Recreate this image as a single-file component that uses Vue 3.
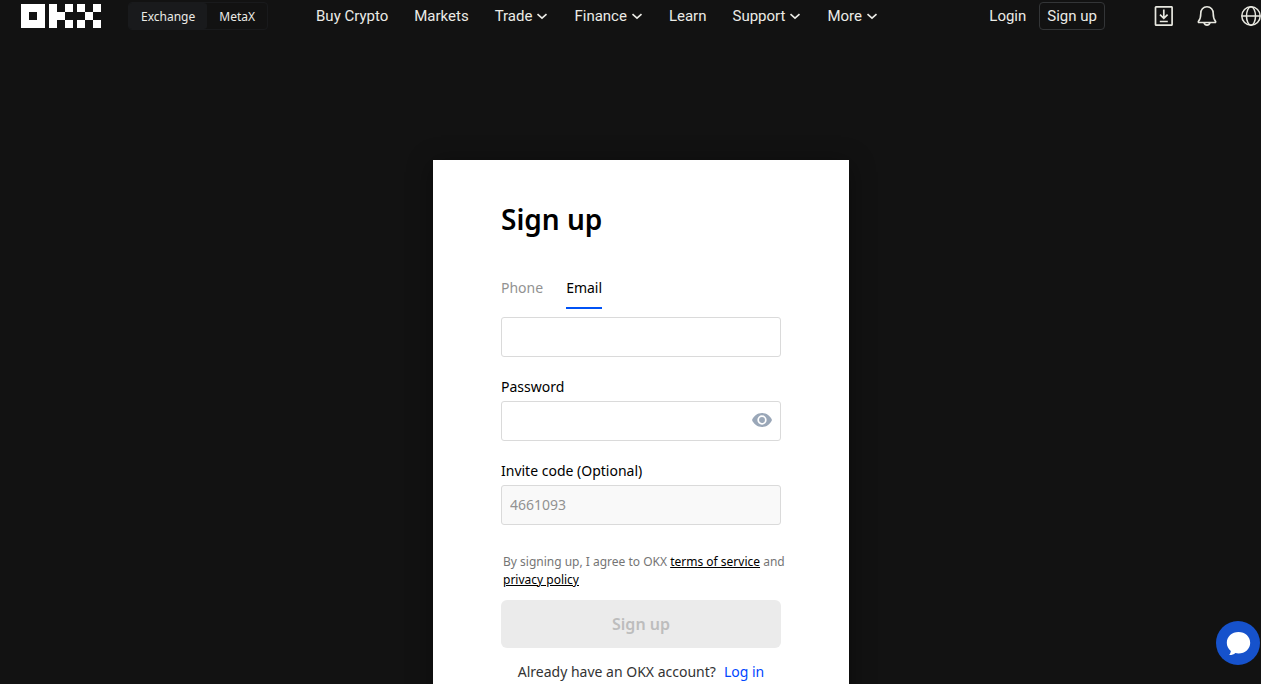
<script setup>
import { ref } from 'vue'

const navItems = [
  { label: 'Buy Crypto', menu: false },
  { label: 'Markets', menu: false },
  { label: 'Trade', menu: true },
  { label: 'Finance', menu: true },
  { label: 'Learn', menu: false },
  { label: 'Support', menu: true },
  { label: 'More', menu: true },
]

const tabs = ['Phone', 'Email']
const activeTab = ref('Email')
const account = ref('')
const password = ref('')
const showPassword = ref(false)
const inviteCode = ref('4661093')
</script>

<template>
  <div class="page">
    <header class="header">
      <a class="logo" href="#" aria-label="OKX">
        <svg width="80" height="24" viewBox="0 0 80 24" fill="#fff" shape-rendering="crispEdges" aria-hidden="true">
          <path fill-rule="evenodd" d="M0 0h24v24H0zM8 8v8h8V8z" />
          <path d="M28 0h8v8h8v8h-8v8h-8zM44 0h8v8h-8zM44 16h8v8h-8z" />
          <path d="M56 0h8v8h-8zM72 0h8v8h-8zM64 8h8v8h-8zM56 16h8v8h-8zM72 16h8v8h-8z" />
        </svg>
      </a>
      <div class="switch">
        <button type="button" class="switch-item on">Exchange</button>
        <button type="button" class="switch-item">MetaX</button>
      </div>
      <nav class="nav">
        <a v-for="item in navItems" :key="item.label" class="nav-item" href="#">
          {{ item.label }}
          <svg v-if="item.menu" width="12" height="12" viewBox="0 0 12 12" aria-hidden="true">
            <path d="M1.5 4.2 6 8.2l4.500-4" fill="none" stroke="currentColor" stroke-width="1.600" />
          </svg>
        </a>
      </nav>
      <div class="tools">
        <a class="login" href="#">Login</a>
        <a class="signup" href="#">Sign up</a>
        <button type="button" class="icon first" aria-label="Download">
          <svg width="20" height="20" viewBox="0 0 20 20" fill="none" stroke="#e8e8e0" stroke-width="1.700" aria-hidden="true">
            <rect x="2.500" y="0.800" width="16.600" height="18.400" rx="0.800" />
            <path d="M10.800 3.500v8.700M7 8.700l3.800 3.700 3.800-3.700M6.800 15.500h8" />
          </svg>
        </button>
        <button type="button" class="icon" aria-label="Notifications">
          <svg width="20" height="20" viewBox="0 0 20 20" fill="none" stroke="#e8e8e0" stroke-width="1.600" stroke-linejoin="round" aria-hidden="true">
            <path d="M10 .8C6 .8 3.800 3.700 3.800 7.200c0 4.200-.8 6.300-2.300 8.100-.4.600-.1 1.200.5 1.200h16c.6 0 .9-.6.5-1.200-1.500-1.800-2.300-3.900-2.300-8.100C16.200 3.700 14 .8 10 .8z" />
            <path d="M7 16.800c.5 1.500 1.600 2.300 3 2.300s2.500-.8 3-2.300" />
          </svg>
        </button>
        <button type="button" class="icon" aria-label="Language">
          <svg width="20" height="20" viewBox="0 0 20 20" fill="none" stroke="#e8e8e0" stroke-width="1.500" aria-hidden="true">
            <circle cx="10" cy="10" r="9.200" />
            <ellipse cx="10" cy="10" rx="4.500" ry="9.200" />
            <path d="M.8 10h18.400" />
          </svg>
        </button>
      </div>
    </header>

    <main class="main">
      <form class="card" @submit.prevent>
        <h1>Sign up</h1>
        <div class="tabs" role="tablist">
          <button
            v-for="tab in tabs"
            :key="tab"
            type="button"
            role="tab"
            class="tab"
            :class="{ active: tab === activeTab }"
            :aria-selected="tab === activeTab"
            @click="activeTab = tab"
          >{{ tab }}</button>
        </div>
        <input v-model="account" class="field" type="text" :aria-label="activeTab" />

        <label class="label" for="password">Password</label>
        <div class="field-wrap">
          <input id="password" v-model="password" class="field" :type="showPassword ? 'text' : 'password'" />
          <button type="button" class="eye" aria-label="Show password" @click="showPassword = !showPassword">
            <svg width="20" height="14" viewBox="0 0 20 14" aria-hidden="true">
              <path d="M10 0C5.500 0 1.700 2.800 0 7c1.700 4.200 5.500 7 10 7s8.300-2.800 10-7c-1.700-4.200-5.500-7-10-7z" fill="#9aa7b8" />
              <circle cx="10" cy="7" r="3.800" fill="#9aa7b8" stroke="#fff" stroke-width="1.700" />
            </svg>
          </button>
        </div>

        <label class="label" for="invite">Invite code (Optional)</label>
        <input id="invite" v-model="inviteCode" class="field filled" type="text" disabled />

        <p class="terms">
          By signing up, I agree to OKX <a href="#">terms of service</a> and <a href="#">privacy policy</a>
        </p>
        <button type="submit" class="submit" disabled>Sign up</button>
        <p class="existing">Already have an OKX account?<a href="#">Log in</a></p>
      </form>
    </main>

    <button type="button" class="chat" aria-label="Chat">
      <svg width="44" height="44" viewBox="0 0 44 44" aria-hidden="true">
        <path d="M22.500 11c-6.600 0-11.700 4.600-11.700 10.700 0 3.300 1.500 6.200 4 8.200-.2 1.800-.7 2.900-1.700 4.200 2.600.1 4.700-.6 6.200-2.100 1 .3 2.100.4 3.200.4 6.600 0 11.700-4.600 11.700-10.700S29.100 11 22.500 11z" fill="#fff" />
      </svg>
    </button>
  </div>
</template>

<style>
body {
  margin: 0;
  background: #121212;
}
</style>

<style scoped>
.page {
  height: 100vh;
  overflow: hidden;
  background: #121212;
  color: #000;
  font-family: "Noto Sans", sans-serif;
  font-size: 14px;
}
.page * {
  box-sizing: border-box;
}
button,
input {
  font: inherit;
}
button {
  margin: 0;
  padding: 0;
  border: 0;
  background: none;
  color: inherit;
}
a {
  color: inherit;
  text-decoration: none;
}
svg {
  display: block;
}
.header {
  display: flex;
  align-items: center;
  height: 32px;
  padding-left: 21px;
  color: #ebebe6;
  font-family: Roboto, sans-serif;
  font-size: 15px;
  white-space: nowrap;
}
.switch {
  display: flex;
  height: 28px;
  margin-left: 27px;
  border: 1px solid #191a1c;
  border-radius: 4px;
  font-family: "Noto Sans", sans-serif;
  font-size: 12px;
}
.switch-item {
  padding: 0 12px;
  border-radius: 3px;
}
.switch-item.on {
  background: #191a1c;
}
.nav {
  display: flex;
  gap: 26px;
  margin-left: 48px;
}
.nav-item {
  display: flex;
  align-items: center;
  gap: 4px;
}
.tools {
  display: flex;
  align-items: center;
  margin-left: auto;
}
.signup {
  height: 28px;
  margin-left: 13px;
  padding: 0 7px;
  border: 1px solid #333537;
  border-radius: 4px;
  line-height: 26px;
}
.icon {
  margin-left: 24px;
}
.icon.first {
  margin-left: 48px;
}
.main {
  display: flex;
  justify-content: center;
  padding: 128px 0 0 21px;
}
.card {
  width: 416px;
  padding: 39px 68px;
  background: #fff;
  box-shadow: 0 4px 24px rgba(0, 0, 0, 0.4);
}
h1 {
  margin: 0;
  font-size: 28px;
  font-weight: 600;
  line-height: 40px;
}
.tabs {
  display: flex;
  gap: 23px;
  margin: 33px 0 8px;
}
.tab {
  height: 37px;
  padding-bottom: 5px;
  border-bottom: 2px solid transparent;
  color: #929292;
}
.tab.active {
  border-color: #0052f5;
  color: #000;
}
.field {
  display: block;
  width: 100%;
  height: 40px;
  padding: 0 8px 2px;
  border: 1px solid #dadada;
  border-radius: 3px;
  outline: 0;
  background: #fff;
}
.field.filled {
  background: #f9f9f9;
  color: #929292;
}
.label {
  display: block;
  margin-top: 20px;
  line-height: 20px;
  padding-bottom: 4px;
}
.field-wrap {
  position: relative;
}
.eye {
  position: absolute;
  top: 12px;
  right: 9px;
}
.terms {
  margin: 28px -8px 11px 0;
  padding-left: 2px;
  color: #757575;
  font-size: 12px;
  line-height: 18px;
}
.terms a {
  color: #000;
  text-decoration: underline;
}
.submit {
  display: block;
  width: 100%;
  height: 48px;
  border-radius: 6px;
  background: #ebebeb;
  color: #bdbdbd;
  font-size: 16px;
  font-weight: 600;
}
.existing {
  margin: 14px 0 0;
  color: #333;
  line-height: 20px;
  text-align: center;
}
.existing a {
  margin-left: 8px;
  color: #0046ff;
}
.chat {
  position: fixed;
  right: 1px;
  bottom: 19px;
  border-radius: 50%;
  background: #1652cc;
}
</style>
